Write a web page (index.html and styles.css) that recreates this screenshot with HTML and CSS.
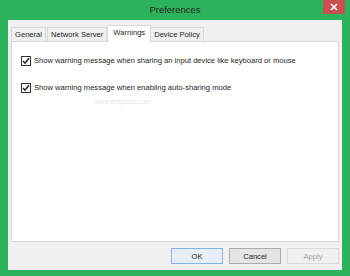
FILE: index.html
```html
<!DOCTYPE html>
<html lang="en">
<head>
  <meta charset="UTF-8" />
  <title>Preferences</title>
  <link rel="stylesheet" href="styles.css">
</head>
<body>
  <div class="window">
    <div class="titlebar">
      <span class="title">Preferences</span>
      <span class="close">
        <svg width="8" height="8" viewBox="0 0 8 8"><path d="M1 1 L7 7 M7 1 L1 7" stroke="#fff" stroke-width="1.6"/></svg>
      </span>
    </div>
    <div class="client">
      <div class="tabs">
        <div class="tab">General</div>
        <div class="tab">Network Server</div>
        <div class="tab active">Warnings</div>
        <div class="tab">Device Policy</div>
      </div>
      <div class="panel">
        <label class="check">
          <span class="box"><svg width="8" height="8" viewBox="0 0 8 8"><path d="M1 4 L3 6.2 L7 1.2" fill="none" stroke="#222" stroke-width="1.5"/></svg></span>
          Show warning message when sharing an input device like keyboard or mouse
        </label>
        <label class="check">
          <span class="box"><svg width="8" height="8" viewBox="0 0 8 8"><path d="M1 4 L3 6.2 L7 1.2" fill="none" stroke="#222" stroke-width="1.5"/></svg></span>
          Show warning message when enabling auto-sharing mode
        </label>
        <div class="mark">www.softpedia.com</div>
      </div>
      <div class="buttons">
        <button class="btn default">OK</button>
        <button class="btn">Cancel</button>
        <button class="btn" disabled>Apply</button>
      </div>
    </div>
  </div>
</body>
</html>
```

FILE: styles.css
```css
body {
  margin: 0;
  font-family: "Liberation Sans", Arial, sans-serif;
  font-size: 7.6px;
  color: #1e1e1e;
}
.window {
  width: 350px;
  height: 276px;
  box-sizing: border-box;
  background: #2db35b;
  padding: 0 8px 6px 8px;
  display: flex;
  flex-direction: column;
}
.titlebar {
  height: 21px;
  position: relative;
  display: flex;
  justify-content: center;
  align-items: center;
}
.title {
  font-size: 9.5px;
  color: #262626;
  margin-top: -1px;
}
.close {
  position: absolute;
  top: 0;
  right: -3px;
  width: 22px;
  height: 14px;
  background: #c75050;
  display: flex;
  align-items: center;
  justify-content: center;
}
.client {
  flex: 1;
  background: #f0f0f0;
  padding: 5px 3px 6px 3px;
  display: flex;
  flex-direction: column;
}
.tabs {
  display: flex;
  align-items: flex-end;
  height: 16px;
  position: relative;
  z-index: 1;
}
.tab {
  height: 14px;
  box-sizing: border-box;
  padding: 0 3px;
  border: 1px solid #d9d9d9;
  border-bottom: none;
  background: #f0f0f0;
  line-height: 14px;
  margin-right: 1px;
}
.tab.active {
  height: 17px;
  margin-bottom: -1px;
  background: #fff;
  padding: 0 5px;
  line-height: 13px;
  margin-left: -1px;
  margin-right: -1px;
}
.panel {
  height: 201px;
  box-sizing: border-box;
  background: #fff;
  border: 1px solid #d9d9d9;
  padding: 12px 9px 0 9px;
  position: relative;
}
.check {
  display: flex;
  align-items: center;
  height: 13px;
  margin-bottom: 14px;
}
.box {
  width: 8px;
  height: 8px;
  border: 1px solid #333;
  background: #fff;
  margin-right: 3px;
  display: flex;
}
.mark {
  position: absolute;
  left: 83px;
  top: 56px;
  font-size: 6.5px;
  color: #e8e8e8;
}
.buttons {
  display: flex;
  justify-content: flex-end;
  gap: 6px;
  margin-top: 6px;
}
.btn {
  width: 52px;
  height: 16px;
  padding: 0;
  font-family: inherit;
  font-size: 7.6px;
  color: #1e1e1e;
  background: #e5e5e5;
  border: 1px solid #acacac;
}
.btn.default {
  border-color: #7eb4ea;
  background: #e8eef5;
}
.btn:disabled {
  color: #a0a0a0;
  border-color: #d9d9d9;
  background: #f0f0f0;
}
```
